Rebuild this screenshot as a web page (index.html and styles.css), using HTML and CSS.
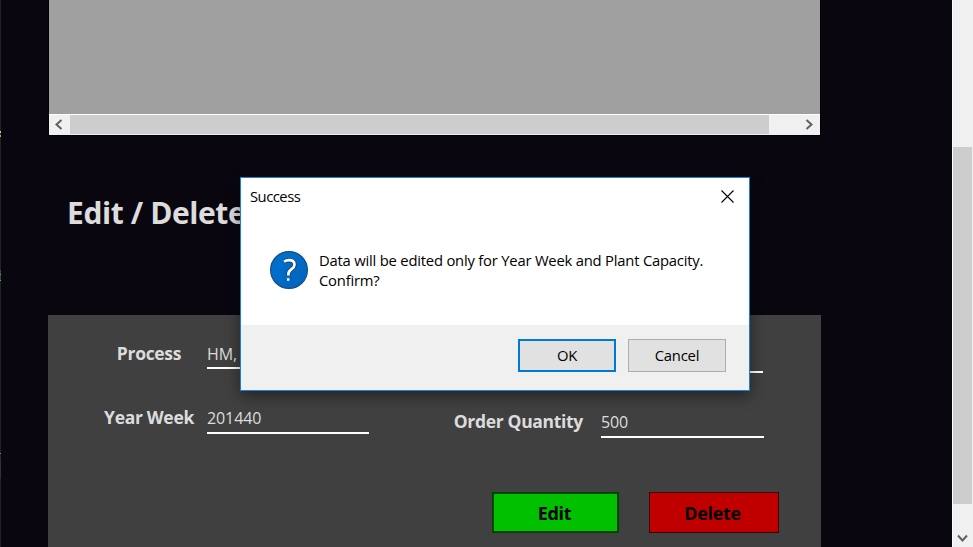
FILE: index.html
```html
<!DOCTYPE html>
<html lang="en">
<head>
<meta charset="utf-8">
<title>Edit / Delete</title>
<link rel="stylesheet" href="styles.css">
</head>
<body>
<div class="app">
  <div class="edge"></div>
  <main class="main">
    <section class="table">
      <div class="table-body"></div>
      <div class="hscroll">
        <svg class="arrow" width="21" height="20" viewBox="0 0 21 20"><path d="M12.5 5L7.5 9.5L12.5 14"/></svg>
        <div class="hthumb"></div>
        <svg class="arrow hright" width="21" height="20" viewBox="0 0 21 20"><path d="M7.5 5L12.5 9.5L7.5 14"/></svg>
      </div>
    </section>
    <h1 class="title">Edit / Delete</h1>
    <section class="panel">
      <div class="column left">
        <div class="field"><label>Process</label><div class="input">HM,</div></div>
        <div class="field"><label>Year Week</label><div class="input">201440</div></div>
      </div>
      <div class="column right">
        <div class="field"><label></label><div class="input short"></div></div>
        <div class="field"><label>Order Quantity</label><div class="input">500</div></div>
        <div class="actions">
          <button class="edit">Edit</button>
          <button class="delete">Delete</button>
        </div>
      </div>
    </section>
  </main>
  <div class="vscroll">
    <div class="vthumb"></div>
    <svg class="arrow" width="20" height="20" viewBox="0 0 20 20"><path d="M5 7.5L9.5 12.5L14 7.5"/></svg>
  </div>
</div>
<div class="dialog" role="dialog">
  <header class="dialog-head">
    <span>Success</span>
    <svg width="13" height="13" viewBox="0 0 13 13"><path d="M.5 .5L12.5 12.5M12.5 .5L.5 12.5" stroke="#000" stroke-width="1.1" fill="none"/></svg>
  </header>
  <div class="dialog-body">
    <svg width="38" height="38" viewBox="0 0 38 38">
      <defs><linearGradient id="g" x1="0" y1="0" x2="1" y2="1"><stop offset="0" stop-color="#0072d0"/><stop offset="1" stop-color="#0064bd"/></linearGradient></defs>
      <circle cx="19" cy="19" r="18.4" fill="url(#g)" stroke="#174d7c" stroke-width="1.2"/>
      <g fill="none" stroke-linejoin="round">
        <path d="M14.1 10.6Q16.2 9.2 19 9.2C22.5 9.2 24.5 11 24.5 13.7C24.5 18.2 18.4 18.2 18.4 22.9V24.6M18.2 27.2V29.8" stroke="#15466f" stroke-width="4.6"/>
        <path d="M14.1 10.6Q16.2 9.2 19 9.2C22.5 9.2 24.5 11 24.5 13.7C24.5 18.2 18.4 18.2 18.4 22.9V24.6M18.2 27.2V29.8" stroke="#fff" stroke-width="2.7"/>
      </g>
    </svg>
    <p>Data will be edited only for Year Week and Plant Capacity.<br>Confirm?</p>
  </div>
  <footer class="dialog-foot">
    <button class="ok">OK</button>
    <button class="cancel">Cancel</button>
  </footer>
</div>
</body>
</html>
```
FILE: styles.css
```css
* { box-sizing: border-box; }
body {
  margin: 0;
  overflow: hidden;
  background: #090610;
  font-family: "Open Sans", "Noto Sans", sans-serif;
}
button { font: inherit; letter-spacing: inherit; color: #000; padding: 0; }
svg { display: block; flex: none; }
.app { display: flex; height: 547px; }
.edge {
  width: 1px;
  background: linear-gradient(#222 0 131px, #d4cf7a 131px 133px, #493418 133px 135px, #9caf78 135px 137px, #222 137px 270px, #405018 270px 274px, #529bdd 274px 275px, #405018 275px 280px, #529bdd 280px 281px, #222 281px 453px, #888 453px 454px, #242424 454px 457px, #333 457px 479px, #222 479px);
}
.main { width: 951px; display: flex; flex-direction: column; }
.table {
  width: 773px;
  margin-left: 47px;
  border: solid #000;
  border-width: 0 1px 1px;
}
.table-body { height: 114px; background: #a0a0a0; }
.hscroll {
  display: flex;
  height: 21px;
  background: #f0f0f0;
  border-top: 1px solid #fff;
}
.hthumb { width: 699px; height: 19px; background: #cdcdcd; }
.hright { margin-left: auto; }
.arrow path { fill: none; stroke: #606060; stroke-width: 2; }
.title {
  height: 179px;
  margin: 0;
  padding: 55px 0 0 66px;
  color: #dcdcdc;
  font-size: 30px;
  line-height: 43px;
  letter-spacing: -.4px;
}
.panel {
  display: flex;
  width: 773px;
  height: 232px;
  margin-left: 47px;
  background: #404040;
}
.left { width: 321px; padding: 22px 0 0 42px; }
.right { margin-left: 77px; padding-top: 26px; }
.field { display: flex; height: 65px; align-items: flex-start; }
label {
  width: 117px;
  padding-left: 1px;
  text-align: center;
  color: #dcdcdc;
  font-size: 17.5px;
  font-weight: 700;
  line-height: 30px;
  letter-spacing: -.32px;
  white-space: nowrap;
}
.right label { width: 155px; padding: 0 18px 0 0; text-align: right; }
.input {
  width: 162px;
  height: 32px;
  border-bottom: 2px solid #fff;
  color: #dcdcdc;
  font-size: 16px;
  line-height: 32px;
  letter-spacing: -.1px;
}
.right .input { width: 163px; }
.right .short { width: 162px; }
.actions { display: flex; gap: 30px; margin: 21px 0 0 46px; }
.actions button { height: 41px; font-size: 18px; font-weight: 700; line-height: 36px; letter-spacing: -.3px; }
.edit { width: 127px; background: #00c000; border: 2px solid #004600; }
.actions .edit { padding-right: 2px; }
.delete { width: 130px; background: #c00000; border: 1px solid #400000; }
.actions .delete { padding-right: 3px; }
.left .field:first-child .input { line-height: 34px; }
.left .field:first-child label { line-height: 33px; }
.dialog {
  position: absolute;
  left: 240px;
  top: 177px;
  width: 510px;
  height: 214px;
  border: 1px solid #1683d8;
  background: #fff;
  color: #000;
  font-size: 14.8px;
  letter-spacing: -.21px;
  box-shadow: 0 5px 14px rgba(0, 0, 0, .45);
}
.dialog-head {
  display: flex;
  height: 37px;
  padding: 0 15px 0 9px;
  justify-content: space-between;
  align-items: center;
}
.dialog-head span { padding-bottom: 2px; letter-spacing: -.5px; }
.dialog-body { display: flex; height: 110px; padding: 36px 0 0 29px; }
.dialog-body p { margin: -1px 0 0 11px; line-height: 20px; white-space: nowrap; }
.dialog-foot {
  display: flex;
  height: 65px;
  padding: 14px 23px 0;
  justify-content: flex-end;
  gap: 12px;
  background: #f0f0f0;
}
.dialog-foot button { width: 98px; height: 33px; padding-bottom: 2px; background: #e1e1e1; border: 1px solid #adadad; }
.dialog-foot .ok { border: 2px solid #0078d7; }
.vscroll {
  width: 21px;
  padding-top: 147px;
  background: #f0f0f0;
  border-left: 1px solid #fff;
}
.vthumb { width: 19px; height: 357px; margin-bottom: 24px; background: #cdcdcd; }
```
